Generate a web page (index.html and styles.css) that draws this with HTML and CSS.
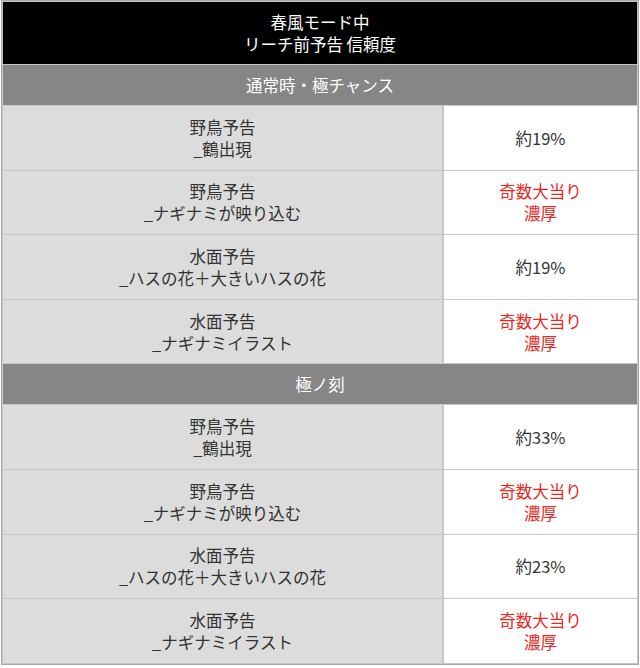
FILE: index.html
```html
<!DOCTYPE html>
<html lang="ja">
<head>
<meta charset="utf-8">
<link rel="stylesheet" href="styles.css">
</head>
<body>
<table class="tbl">
  <colgroup><col class="col-name"><col class="col-val"></colgroup>
  <tr><th class="head" colspan="2">春風モード中<br>リーチ前予告 信頼度</th></tr>
  <tr><th class="sec" colspan="2">通常時・極チャンス</th></tr>
  <tr><td class="name">野鳥予告<br>_鶴出現</td><td class="val">約19%</td></tr>
  <tr><td class="name">野鳥予告<br>_ナギナミが映り込む</td><td class="val red">奇数大当り<br>濃厚</td></tr>
  <tr><td class="name">水面予告<br>_ハスの花＋大きいハスの花</td><td class="val">約19%</td></tr>
  <tr><td class="name">水面予告<br>_ナギナミイラスト</td><td class="val red">奇数大当り<br>濃厚</td></tr>
  <tr><th class="sec" colspan="2">極ノ刻</th></tr>
  <tr><td class="name">野鳥予告<br>_鶴出現</td><td class="val">約33%</td></tr>
  <tr><td class="name">野鳥予告<br>_ナギナミが映り込む</td><td class="val red">奇数大当り<br>濃厚</td></tr>
  <tr><td class="name">水面予告<br>_ハスの花＋大きいハスの花</td><td class="val">約23%</td></tr>
  <tr><td class="name">水面予告<br>_ナギナミイラスト</td><td class="val red">奇数大当り<br>濃厚</td></tr>
</table>
</body>
</html>
```
FILE: styles.css
```css
html, body {
  margin: 0;
  padding: 0;
  background: #fff;
}
body {
  font-family: "Noto Sans CJK JP", "Noto Sans", sans-serif;
  font-size: 16.5px;
  line-height: 22px;
  color: #333;
}
.tbl {
  width: 638px;
  margin-left: 1px;
  border-collapse: separate;
  border-spacing: 1px;
  background: #c6c6c6;
  border: 1px solid #a8a8a8;
  table-layout: fixed;
}
.col-name {
  width: 440px;
}
.tbl th, .tbl td {
  text-align: center;
  vertical-align: middle;
  padding: 0;
  font-weight: normal;
}
.head {
  background: #000;
  color: #fff;
  height: 62px;
}
.sec {
  background: #868686;
  color: #fff;
  height: 40px;
}
.name {
  background: #dcdcdc;
  height: 63.6px;
  border-right: 1px solid #c6c6c6;
}
.val {
  background: #fff;
}
.red {
  color: #e8281e;
}
```
